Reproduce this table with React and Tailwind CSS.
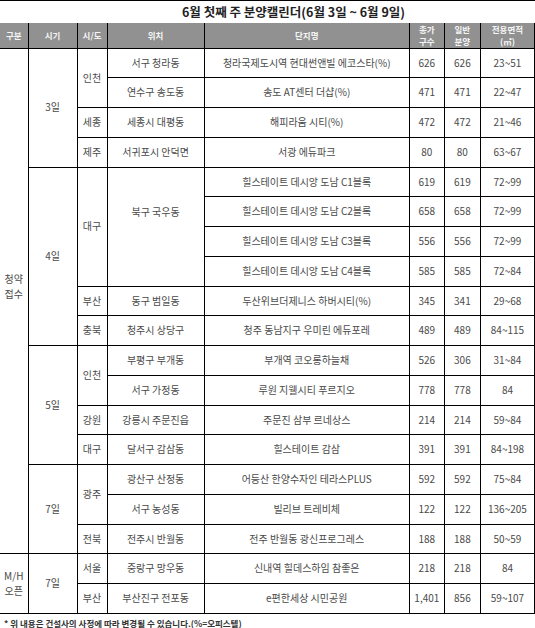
import React from 'react';

const rows = [
  { loc: '서구 청라동', name: '청라국제도시역 현대썬앤빌 에코스타(%)', total: '626', sale: '626', area: '23~51' },
  { loc: '연수구 송도동', name: '송도 AT센터 더샵(%)', total: '471', sale: '471', area: '22~47' },
  { loc: '세종시 대평동', name: '해피라움 시티(%)', total: '472', sale: '472', area: '21~46' },
  { loc: '서귀포시 안덕면', name: '서광 에듀파크', total: '80', sale: '80', area: '63~67' },
  { loc: '북구 국우동', name: '힐스테이트 데시앙 도남 C1블록', total: '619', sale: '619', area: '72~99' },
  { loc: null, name: '힐스테이트 데시앙 도남 C2블록', total: '658', sale: '658', area: '72~99' },
  { loc: null, name: '힐스테이트 데시앙 도남 C3블록', total: '556', sale: '556', area: '72~99' },
  { loc: null, name: '힐스테이트 데시앙 도남 C4블록', total: '585', sale: '585', area: '72~84' },
  { loc: '동구 범일동', name: '두산위브더제니스 하버시티(%)', total: '345', sale: '341', area: '29~68' },
  { loc: '청주시 상당구', name: '청주 동남지구 우미린 에듀포레', total: '489', sale: '489', area: '84~115' },
  { loc: '부평구 부개동', name: '부개역 코오롱하늘채', total: '526', sale: '306', area: '31~84' },
  { loc: '서구 가정동', name: '루원 지웰시티 푸르지오', total: '778', sale: '778', area: '84' },
  { loc: '강릉시 주문진읍', name: '주문진 삼부 르네상스', total: '214', sale: '214', area: '59~84' },
  { loc: '달서구 감삼동', name: '힐스테이트 감삼', total: '391', sale: '391', area: '84~198' },
  { loc: '광산구 산정동', name: '어등산 한양수자인 테라스PLUS', total: '592', sale: '592', area: '75~84' },
  { loc: '서구 농성동', name: '빌리브 트레비체', total: '122', sale: '122', area: '136~205' },
  { loc: '전주시 반월동', name: '전주 반월동 광신프로그레스', total: '188', sale: '188', area: '50~59' },
  { loc: '중랑구 망우동', name: '신내역 힐데스하임 참좋은', total: '218', sale: '218', area: '84' },
  { loc: '부산진구 전포동', name: 'e편한세상 시민공원', total: '1,401', sale: '856', area: '59~107' },
];

// leading cells per row index: [구분, 시기, 시/도] with rowSpan
const lead = {
  0: [{ t: ['청약', '접수'], span: 17, pb: true }, { t: ['3일'], span: 4 }, { t: ['인천'], span: 2 }],
  2: [null, null, { t: ['세종'], span: 1 }],
  3: [null, null, { t: ['제주'], span: 1 }],
  4: [null, { t: ['4일'], span: 6 }, { t: ['대구'], span: 4 }],
  8: [null, null, { t: ['부산'], span: 1 }],
  9: [null, null, { t: ['충북'], span: 1 }],
  10: [null, { t: ['5일'], span: 4 }, { t: ['인천'], span: 2 }],
  12: [null, null, { t: ['강원'], span: 1 }],
  13: [null, null, { t: ['대구'], span: 1 }],
  14: [null, { t: ['7일'], span: 3 }, { t: ['광주'], span: 2 }],
  16: [null, null, { t: ['전북'], span: 1 }],
  17: [{ t: ['M/H', '오픈'], span: 2 }, { t: ['7일'], span: 2 }, { t: ['서울'], span: 1 }],
  18: [null, null, { t: ['부산'], span: 1 }],
};

const td = 'border border-black text-center align-middle text-[10px] leading-[14.5px] text-[#4a4a4a] p-0';
const th = 'border-x border-b border-black p-0 font-bold';

const Lines = ({ t }) => t.map((s, i) => <div key={i}>{s}</div>);

export default function App() {
  return (
    <div className="w-[535px] h-[628px] bg-white border-t border-black" style={{ fontFamily: '"Noto Sans CJK KR", "Noto Sans", sans-serif' }}>
      <div className="h-[22px] flex items-center justify-center pl-[52px] text-[12.5px] font-bold text-[#222]">
        6월 첫째 주 분양캘린더(6월 3일 ~ 6월 9일)
      </div>
      <table className="w-[535px] table-fixed border-collapse">
        <colgroup>
          <col className="w-[28px]" />
          <col className="w-[49px]" />
          <col className="w-[30px]" />
          <col className="w-[97px]" />
          <col className="w-[205px]" />
          <col className="w-[35px]" />
          <col className="w-[36px]" />
          <col className="w-[54px]" />
        </colgroup>
        <thead>
          <tr className="h-[24px] bg-[#919191] text-[#f4f4f4] text-[8.5px] leading-[12.3px]">
            <th className="border-r border-b border-black p-0 font-bold">구분</th>
            <th className={th}>시기</th>
            <th className={th}>시/도</th>
            <th className={th}>위치</th>
            <th className={th}>단지명</th>
            <th className={th}><div>총가</div><div>구수</div></th>
            <th className={th}><div>일반</div><div>분양</div></th>
            <th className={th}><div>전용면적</div><div>(㎡)</div></th>
          </tr>
        </thead>
        <tbody>
          {rows.map((r, i) => {
            const l = lead[i] || [];
            return (
              <tr key={i} className="h-[29.75px]">
                {l[0] && (
                  <td rowSpan={l[0].span} className={`${td} border-l-0 ${l[0].pb ? 'pb-[28px]' : ''}`}>
                    <Lines t={l[0].t} />
                  </td>
                )}
                {l[1] && (
                  <td rowSpan={l[1].span} className={td}>
                    <Lines t={l[1].t} />
                  </td>
                )}
                {l[2] && (
                  <td rowSpan={l[2].span} className={td}>
                    <Lines t={l[2].t} />
                  </td>
                )}
                {r.loc !== null && (
                  <td rowSpan={i === 4 ? 4 : 1} className={`${td} ${i === 4 ? 'pb-[28px]' : ''}`}>{r.loc}</td>
                )}
                <td className={td}>{r.name}</td>
                <td className={td}>{r.total}</td>
                <td className={td}>{r.sale}</td>
                <td className={td}>{r.area}</td>
              </tr>
            );
          })}
        </tbody>
      </table>
      <div className="pl-[4px] pt-[3px] text-[8.5px] leading-[12.5px] font-bold text-[#333]">
        * 위 내용은 건설사의 사정에 따라 변경될 수 있습니다.(%=오피스텔)
      </div>
    </div>
  );
}
